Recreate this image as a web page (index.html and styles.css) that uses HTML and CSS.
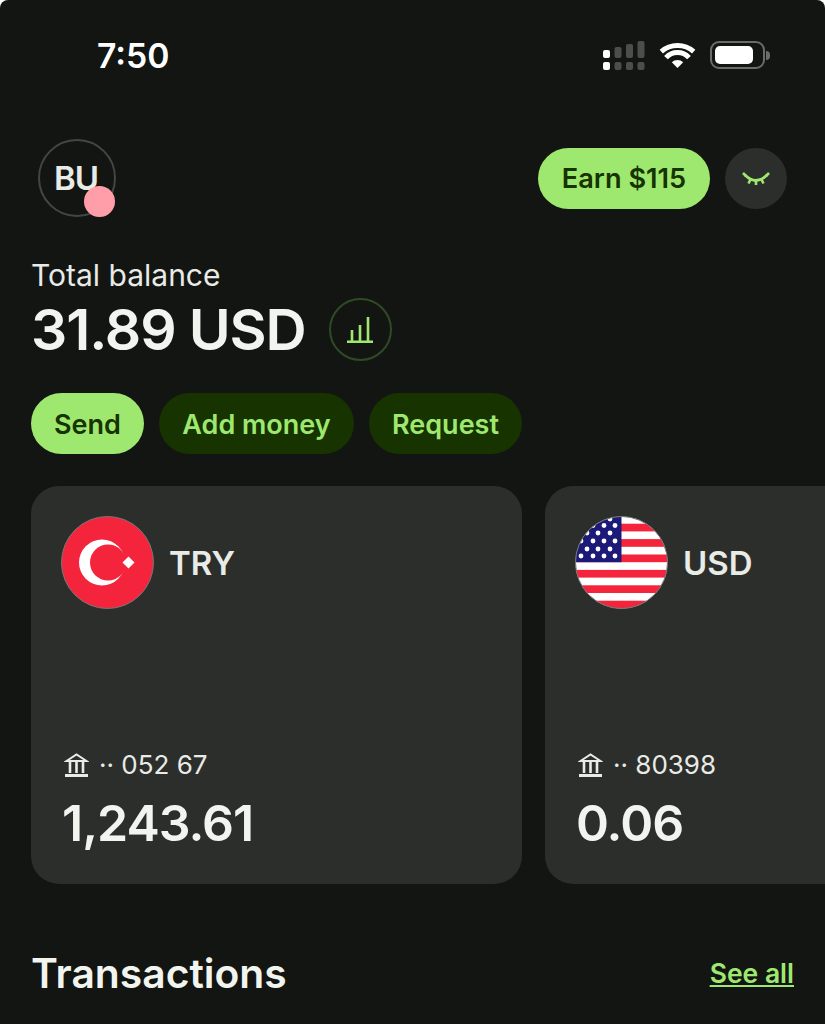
FILE: index.html
```html
<!DOCTYPE html>
<html lang="en">
<head>
	<meta charset="UTF-8">
	<title>Wallet</title>
	<link rel="stylesheet" href="styles.css">
</head>
<body>
	<div class="page">
		<!-- status bar -->
		<div class="status">
			<span class="time">7:50</span>
			<div class="status-icons">
				<svg class="signal" width="45" height="29" viewBox="0 0 45 29">
					<rect x="0" y="9" width="7" height="8" rx="2" fill="#fff"/>
					<rect x="0" y="21" width="7" height="8" rx="2" fill="#fff"/>
					<rect x="11.500" y="6" width="7" height="11" rx="2" fill="#4d4d4d"/>
					<rect x="11.500" y="21" width="7" height="8" rx="2" fill="#4d4d4d"/>
					<rect x="23" y="3" width="7" height="14" rx="2" fill="#4d4d4d"/>
					<rect x="23" y="21" width="7" height="8" rx="2" fill="#4d4d4d"/>
					<rect x="34.500" y="0" width="7" height="17" rx="2" fill="#4d4d4d"/>
					<rect x="34.500" y="21" width="7" height="8" rx="2" fill="#4d4d4d"/>
				</svg>
				<svg class="wifi" width="37" height="27" viewBox="0 0 37 27">
					<path d="M2.300 10.600A24.500 24.500 0 0 1 34.700 10.600" fill="none" stroke="#fff" stroke-width="5"/>
					<path d="M7 16.600A15.500 15.500 0 0 1 30 16.600" fill="none" stroke="#fff" stroke-width="5"/>
					<path d="M18.500 27L12.800 21.300A8 8 0 0 1 24.200 21.300Z" fill="#fff"/>
				</svg>
				<div class="battery">
					<div class="battery-body"><div class="battery-fill"></div></div>
					<div class="battery-cap"></div>
				</div>
			</div>
		</div>

		<!-- header -->
		<div class="header">
			<div class="avatar">
				<span>BU</span>
				<div class="avatar-dot"></div>
			</div>
			<div class="header-right">
				<div class="btn btn-light earn">Earn $115</div>
				<div class="eye">
					<svg width="28" height="16" viewBox="0 0 28 16" fill="none" stroke="#9fe870" stroke-width="2.600">
						<path d="M3 5Q14 16 25 5"/>
						<path d="M4 6L1 3M8.500 9.500L6.500 13.500M14 10.500V15M19.500 9.500L21.500 13.500M24 6L27 3"/>
					</svg>
				</div>
			</div>
		</div>

		<!-- balance -->
		<div class="balance">
			<div class="balance-label">Total balance</div>
			<div class="balance-row">
				<div class="balance-value">31.89 USD</div>
				<div class="chart">
					<svg width="26" height="27" viewBox="0 0 26 27" fill="none" stroke="#9fe870" stroke-width="2.600">
						<path d="M0 25.700H26M5 26V14M13 26V9M21 26V1"/>
					</svg>
				</div>
			</div>
		</div>

		<div class="actions">
			<div class="btn btn-light send">Send</div>
			<div class="btn btn-dark add">Add money</div>
			<div class="btn btn-dark request">Request</div>
		</div>

		<!-- cards -->
		<div class="cards">
			<div class="card">
				<div class="card-top">
					<svg class="flag" width="93" height="93" viewBox="0 0 93 93">
						<circle cx="46.500" cy="46.500" r="46" fill="#f3243c" stroke="#777" stroke-width="1"/>
						<circle cx="41" cy="46.500" r="23" fill="#fff"/>
						<circle cx="47" cy="46.500" r="18" fill="#f3243c"/>
						<path d="M67.500 40.500L73.500 46.500L67.500 52.500L61.500 46.500Z" fill="#fff"/>
					</svg>
					<span class="currency">TRY</span>
				</div>
				<div class="card-bottom">
					<div class="account">
						<svg class="bank" width="25" height="24" viewBox="0 0 25 24" fill="none" stroke="#e8ebe6" stroke-width="2">
							<path d="M2.500 8L12.500 1.500L22.500 8Z"/>
							<path d="M6 9V20M12.500 9V20M19 9V20" stroke-width="2.600"/>
							<path d="M1 22.500H24" stroke-width="3"/>
						</svg>
						<span>·· 052 67</span>
					</div>
					<div class="amount">1,243.61</div>
				</div>
			</div>
			<div class="card">
				<div class="card-top">
					<svg class="flag" width="93" height="93" viewBox="0 0 93 93">
						<defs>
							<clipPath id="round"><circle cx="46.500" cy="46.500" r="46"/></clipPath>
						</defs>
						<g clip-path="url(#round)">
							<rect width="93" height="93" fill="#fff"/>
							<rect y="7.700" width="93" height="7.700" fill="#f3243c"/>
							<rect y="23.100" width="93" height="7.700" fill="#f3243c"/>
							<rect y="38.500" width="93" height="7.700" fill="#f3243c"/>
							<rect y="53.900" width="93" height="7.700" fill="#f3243c"/>
							<rect y="69.300" width="93" height="7.700" fill="#f3243c"/>
							<rect y="84.700" width="93" height="8.300" fill="#f3243c"/>
							<rect width="46.500" height="46.200" fill="#1c1a78"/>
							<g fill="#fff">
								<circle cx="35" cy="3" r="2.400"/>
								<circle cx="18" cy="9.500" r="2.400"/><circle cx="29" cy="9.500" r="2.400"/><circle cx="40" cy="9.500" r="2.400"/>
								<circle cx="12" cy="17" r="2.400"/><circle cx="23" cy="17" r="2.400"/><circle cx="35" cy="17" r="2.400"/>
								<circle cx="6" cy="25" r="2.400"/><circle cx="18" cy="25" r="2.400"/><circle cx="29" cy="25" r="2.400"/><circle cx="40" cy="25" r="2.400"/>
								<circle cx="12" cy="33" r="2.400"/><circle cx="23" cy="33" r="2.400"/><circle cx="35" cy="33" r="2.400"/>
								<circle cx="6" cy="40" r="2.400"/><circle cx="18" cy="40" r="2.400"/><circle cx="29" cy="40" r="2.400"/><circle cx="40" cy="40" r="2.400"/>
							</g>
						</g>
						<circle cx="46.500" cy="46.500" r="46" fill="none" stroke="#777" stroke-width="1"/>
					</svg>
					<span class="currency">USD</span>
				</div>
				<div class="card-bottom">
					<div class="account">
						<svg class="bank" width="25" height="24" viewBox="0 0 25 24" fill="none" stroke="#e8ebe6" stroke-width="2">
							<path d="M2.500 8L12.500 1.500L22.500 8Z"/>
							<path d="M6 9V20M12.500 9V20M19 9V20" stroke-width="2.600"/>
							<path d="M1 22.500H24" stroke-width="3"/>
						</svg>
						<span>·· 80398</span>
					</div>
					<div class="amount">0.06</div>
				</div>
			</div>
		</div>

		<!-- transactions -->
		<div class="section">
			<div class="section-title">Transactions</div>
			<a class="see-all" href="#">See all</a>
		</div>
	</div>
</body>
</html>
```
FILE: styles.css
```css
* {
	margin: 0;
	padding: 0;
	box-sizing: border-box;
}
html, body {
	width: 100%;
	height: 100%;
	overflow: hidden;
	background-color: #fff;
}
body {
	font-family: "Inter", "Liberation Sans", sans-serif;
	color: #f2f4ef;
}
.page {
	width: 825px;
	height: 1024px;
	padding-top: 41px;
	background-color: #131513;
	border-radius: 8px 8px 0 0;
	overflow: hidden;
}

/* status bar */
.status {
	display: flex;
	justify-content: space-between;
	align-items: center;
	height: 29px;
	padding: 0 55px 0 97px;
}
.time {
	font-size: 33.700px;
	font-weight: 600;
	line-height: 29px;
	color: #fff;
}
.status-icons {
	display: flex;
	align-items: flex-start;
}
.signal {
	margin-right: 11px;
}
.wifi {
	margin-right: 14px;
}
.battery {
	display: flex;
	align-items: center;
	height: 28px;
}
.battery-body {
	width: 55px;
	height: 28px;
	padding: 3px;
	border: 2.500px solid #6b6b6b;
	border-radius: 9px;
}
.battery-fill {
	width: 38px;
	height: 100%;
	background-color: #fff;
	border-radius: 5px;
}
.battery-cap {
	width: 4px;
	height: 9px;
	margin-left: 1px;
	background-color: #6b6b6b;
	border-radius: 0 4px 4px 0;
}

/* header */
.header {
	display: flex;
	justify-content: space-between;
	align-items: center;
	margin-top: 69px;
	padding: 0 38px;
}
.avatar {
	position: relative;
	width: 78px;
	height: 78px;
	display: flex;
	align-items: center;
	padding-left: 14px;
	border: 2px solid #444644;
	border-radius: 50%;
	font-size: 33px;
	font-weight: 600;
	letter-spacing: -1px;
	color: #e8ebe6;
}
.avatar-dot {
	position: absolute;
	right: -1px;
	bottom: -2px;
	width: 31px;
	height: 31px;
	background-color: #ff9ea8;
	border-radius: 50%;
}
.header-right {
	display: flex;
	align-items: center;
	gap: 15px;
}
.btn {
	display: flex;
	align-items: center;
	justify-content: center;
	height: 61px;
	padding-top: 1px;
	border-radius: 31px;
	font-size: 27px;
	font-weight: 600;
}
.btn-light {
	background-color: #9fe870;
	color: #163300;
}
.btn-dark {
	background-color: #163300;
	color: #9fe870;
}
.earn {
	width: 172px;
	font-size: 27.200px;
}
.eye {
	width: 62px;
	height: 61px;
	display: flex;
	align-items: center;
	justify-content: center;
	background-color: #2c2e2c;
	border-radius: 50%;
}

/* balance */
.balance {
	margin-top: 41px;
	padding-left: 31px;
}
.balance-label {
	font-size: 30px;
	line-height: 34px;
	color: #e8ebe6;
}
.balance-row {
	display: flex;
	align-items: center;
	gap: 23px;
	margin-top: 6px;
}
.balance-value {
	font-size: 57px;
	font-weight: 600;
	letter-spacing: -1.100px;
	line-height: 63px;
}
.chart {
	width: 63px;
	height: 63px;
	display: flex;
	align-items: center;
	justify-content: center;
	border: 2px solid #2f4a25;
	border-radius: 50%;
}
.actions {
	display: flex;
	gap: 15px;
	margin-top: 32px;
	padding-left: 31px;
}
.send {
	width: 113px;
}
.add {
	width: 195px;
}
.request {
	width: 153px;
}

/* cards */
.cards {
	display: flex;
	gap: 23px;
	margin-top: 32px;
	padding-left: 31px;
}
.card {
	flex: none;
	display: flex;
	flex-direction: column;
	justify-content: space-between;
	width: 491px;
	height: 398px;
	padding: 30px 30px 31px;
	background-color: #2c2e2c;
	border-radius: 28px;
}
.card-top {
	display: flex;
	align-items: center;
	gap: 15px;
}
.currency {
	font-size: 33px;
	font-weight: 600;
	color: #e8ebe6;
}
.account {
	display: flex;
	align-items: center;
	gap: 10px;
	padding-left: 3px;
	font-size: 26px;
	color: #e8ebe6;
}
.amount {
	margin-top: 13px;
	padding-left: 1px;
	font-size: 50px;
	font-weight: 600;
	letter-spacing: -1px;
	line-height: 60px;
}

/* transactions */
.section {
	display: flex;
	justify-content: space-between;
	align-items: center;
	margin-top: 62px;
	padding: 0 31px;
}
.section-title {
	font-size: 40.800px;
	font-weight: 600;
	line-height: 54px;
}
.see-all {
	font-size: 26.500px;
	font-weight: 600;
	color: #9fe870;
}
```
